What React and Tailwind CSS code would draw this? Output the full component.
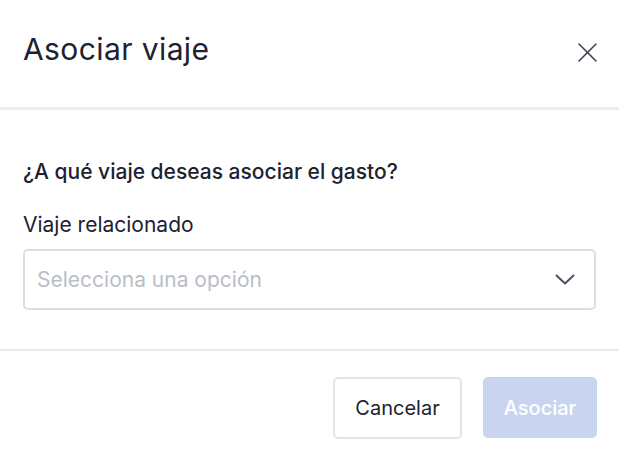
export default function App() {
  return (
    <div className="h-[459px] w-[619px] overflow-hidden bg-white text-[#1c2230] [font-family:Inter,'Noto_Sans',sans-serif]">
      <header className="flex h-[110px] items-start justify-between border-b-[3px] border-[#ececf1] pl-[23px] pr-[22px]">
        <h2 className="mt-[34px] text-[30px] leading-none tracking-[0.4px]">Asociar viaje</h2>
        <button type="button" className="mt-[43px] text-[#3a4150]" aria-label="Cerrar">
          <svg width="19" height="19" viewBox="0 0 19 19" fill="none" stroke="currentColor" strokeWidth="1.6" strokeLinecap="round">
            <path d="M1 1 18 18M18 1 1 18" />
          </svg>
        </button>
      </header>

      <section className="border-b-2 border-[#e9e9ef] px-[23px] pt-[49px] pb-[39px]">
        <p className="text-[21px] font-medium leading-[26px]">¿A qué viaje deseas asociar el gasto?</p>
        <label className="mt-[27px] block text-[21px] leading-[26px]">Viaje relacionado</label>
        <div className="mt-[11px] flex h-[61px] items-center justify-between rounded-[5px] border-2 border-[#dcdee3] pl-[12px] pr-[19px]">
          <span className="text-[21px] text-[#b9bec8]">Selecciona una opción</span>
          <svg width="20" height="11" viewBox="0 0 20 11" fill="none" stroke="#4a5262" strokeWidth="2" strokeLinecap="round" strokeLinejoin="round">
            <path d="M1.5 1.5 10 9.5 18.5 1.5" />
          </svg>
        </div>
      </section>

      <footer className="flex justify-end gap-[21px] px-[22px] pt-[26px]">
        <button
          type="button"
          className="h-[62px] w-[129px] rounded-[5px] border-2 border-[#e3e4e8] text-[20px] text-[#1c2230]"
        >
          Cancelar
        </button>
        <button
          type="button"
          disabled
          className="h-[61px] w-[114px] rounded-[5px] bg-[#c9d5f0] text-[20px] font-medium text-white"
        >
          Asociar
        </button>
      </footer>
    </div>
  );
}
